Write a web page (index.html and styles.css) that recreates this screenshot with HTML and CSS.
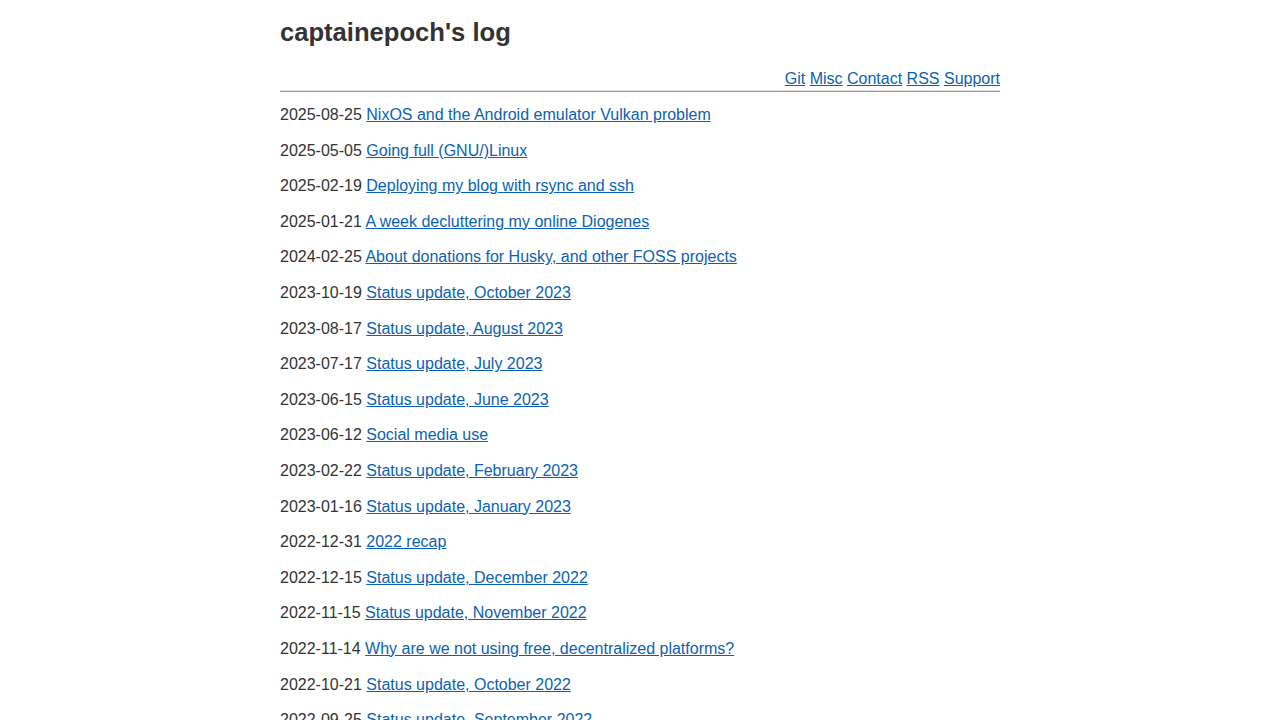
FILE: index.html
```html
<!DOCTYPE html>
<html>
<head>
<meta charset="utf-8">
<title>captainepoch's log</title>
<link rel="stylesheet" href="styles.css">
</head>
<body>
<div class="page">
  <h1 class="title">captainepoch's log</h1>
  <nav class="nav">
    <a href="#">Git</a> <a href="#">Misc</a> <a href="#">Contact</a> <a href="#">RSS</a> <a href="#">Support</a>
  </nav>
  <hr class="rule">
  <ul class="posts">
    <li>2025-08-25 <a href="#">NixOS and the Android emulator Vulkan problem</a></li>
    <li>2025-05-05 <a href="#">Going full (GNU/)Linux</a></li>
    <li>2025-02-19 <a href="#">Deploying my blog with rsync and ssh</a></li>
    <li>2025-01-21 <a href="#">A week decluttering my online Diogenes</a></li>
    <li>2024-02-25 <a href="#">About donations for Husky, and other FOSS projects</a></li>
    <li>2023-10-19 <a href="#">Status update, October 2023</a></li>
    <li>2023-08-17 <a href="#">Status update, August 2023</a></li>
    <li>2023-07-17 <a href="#">Status update, July 2023</a></li>
    <li>2023-06-15 <a href="#">Status update, June 2023</a></li>
    <li>2023-06-12 <a href="#">Social media use</a></li>
    <li>2023-02-22 <a href="#">Status update, February 2023</a></li>
    <li>2023-01-16 <a href="#">Status update, January 2023</a></li>
    <li>2022-12-31 <a href="#">2022 recap</a></li>
    <li>2022-12-15 <a href="#">Status update, December 2022</a></li>
    <li>2022-11-15 <a href="#">Status update, November 2022</a></li>
    <li>2022-11-14 <a href="#">Why are we not using free, decentralized platforms?</a></li>
    <li>2022-10-21 <a href="#">Status update, October 2022</a></li>
    <li>2022-09-25 <a href="#">Status update, September 2022</a></li>
    <li>2022-08-18 <a href="#">Status update, August 2022</a></li>
  </ul>
</div>
</body>
</html>
```

FILE: styles.css
```css
html, body {
  margin: 0;
  padding: 0;
  background: #fff;
}
body {
  font-family: "Liberation Sans", Arial, sans-serif;
  font-size: 16px;
  color: #333;
}
.page {
  width: 720px;
  margin: 0 auto;
  padding-top: 16px;
}
.title {
  font-size: 25.6px;
  font-weight: bold;
  margin: 0;
  line-height: 32px;
  color: #333;
}
.nav {
  text-align: right;
  margin-top: 22px;
  line-height: 18px;
}
a {
  color: #0b62b4;
}
.rule {
  border: none;
  border-top: 1px solid #ddd;
  border-bottom: 1px solid #999;
  margin: 2px 0 0 0;
  height: 0;
}
.posts {
  list-style: none;
  margin: 0;
  padding: 0;
  padding-top: 13px;
}
.posts li {
  line-height: 19.6px;
  margin-bottom: 16px;
}
```
